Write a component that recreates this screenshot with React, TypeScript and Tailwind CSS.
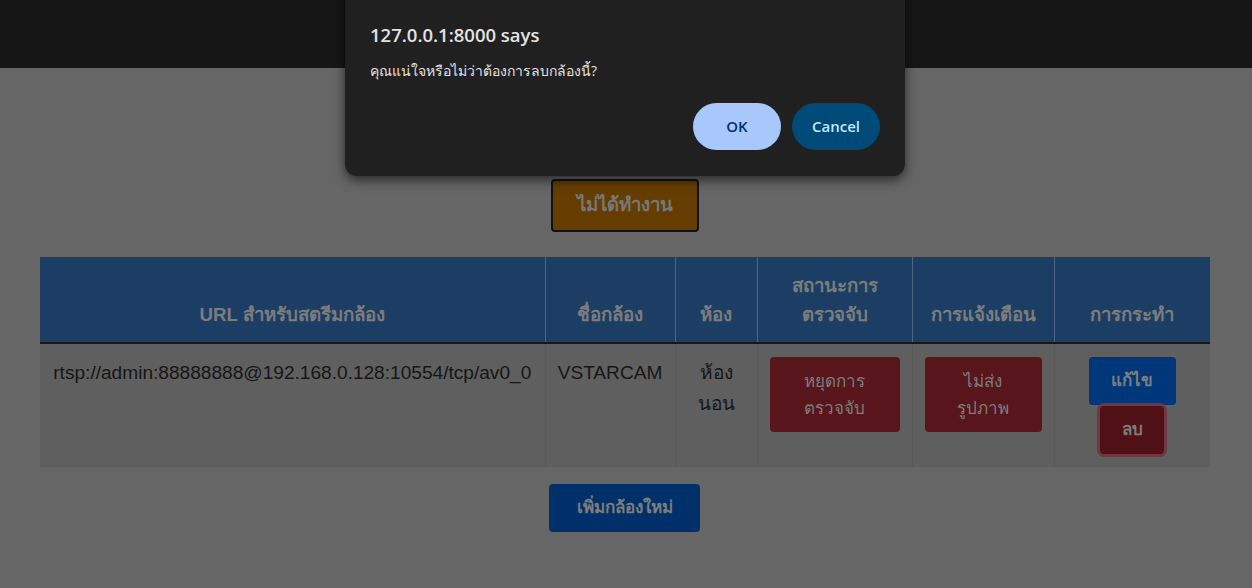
import React from "react";

const cols = [505, 130, 82, 155, 142, 156];

const headers: React.ReactNode[] = [
  "URL สำหรับสตรีมกล้อง",
  "ชื่อกล้อง",
  "ห้อง",
  <>
    สถานะการ
    <br />
    ตรวจจับ
  </>,
  "การแจ้งเตือน",
  "การกระทำ",
];

export default function App() {
  return (
    <div className="relative min-h-[588px] overflow-hidden bg-[#666666] font-['Liberation_Sans',Arial,sans-serif]">
      <header className="h-[68px] bg-[#161616]" />
      <main className="ml-[40px] flex w-[1170px] flex-col items-center">
        <button className="mt-[111px] mr-[1px] h-[53px] w-[148px] rounded-[4px] border-2 border-[#111] bg-[#663d00] text-[18.7px] font-bold text-[#777]">
          ไม่ได้ทำงาน
        </button>
        <table className="mt-[25px] w-[1170px] table-fixed border-collapse">
          <colgroup>
            {cols.map((w, i) => (
              <col key={i} style={{ width: w }} />
            ))}
          </colgroup>
          <thead>
            <tr className="border-b-2 border-[#161616]">
              {headers.map((h, i) => (
                <th
                  key={i}
                  className="border-r border-[#4b6585] bg-[#1d3e64] px-[12px] pt-[14px] pb-[13px] align-bottom text-[18.7px] font-bold leading-[29px] text-[#7c7c7c] last:border-r-0"
                >
                  {h}
                </th>
              ))}
            </tr>
          </thead>
          <tbody>
            <tr className="bg-[#5f5f5f] text-center text-[19.1px] leading-[31px] text-[#161616]">
              <td className="border-r border-[#595959] px-[12px] pt-[13px] align-top">
                rtsp://admin:88888888@192.168.0.128:10554/tcp/av0_0
              </td>
              <td className="border-r border-[#595959] px-[12px] pt-[13px] align-top">VSTARCAM</td>
              <td className="border-r border-[#595959] px-[12px] pt-[13px] align-top">
                ห้อง
                <br />
                นอน
              </td>
              <td className="border-r border-[#595959] px-[12px] pt-[13px] align-top">
                <button className="h-[75px] w-full rounded-[4px] bg-[#58151b] px-[16px] text-[17px] leading-[27px] text-[#7d7d7d]">
                  หยุดการ
                  <br />
                  ตรวจจับ
                </button>
              </td>
              <td className="border-r border-[#595959] px-[12px] pt-[13px] align-top">
                <button className="h-[75px] w-full rounded-[4px] bg-[#58151b] px-[16px] text-[17px] leading-[27px] text-[#7d7d7d]">
                  ไม่ส่ง
                  <br />
                  รูปภาพ
                </button>
              </td>
              <td className="px-[12px] pt-[13px] pb-[13px] align-top">
                <div className="flex flex-col items-center">
                  <button className="h-[48px] w-[87px] rounded-[4px] bg-[#00377a] text-[17px] font-bold leading-[28px] text-[#7d7d7d]">
                    แก้ไข
                  </button>
                  <button className="mt-[1px] h-[48px] w-[64px] rounded-[4px] bg-[#4f1016] text-[17px] font-bold leading-[28px] text-[#7d7d7d] ring-[3px] ring-[#6e3840]">
                    ลบ
                  </button>
                </div>
              </td>
            </tr>
          </tbody>
        </table>
        <button className="mt-[17px] mr-[1px] h-[48px] w-[151px] rounded-[4px] bg-[#00306a] text-[17px] font-bold text-[#7d7d7d]">
          เพิ่มกล้องใหม่
        </button>
      </main>

      <div className="absolute left-[345px] top-[-20px] h-[196px] w-[560px] rounded-[12px] bg-[#202020] px-[25px] pt-[42px] font-['Open_Sans','Noto_Sans',sans-serif] shadow-[0_4px_12px_rgba(0,0,0,0.6)]">
        <div className="text-[18.5px] font-semibold leading-[26px] text-[#e3e3e3]">127.0.0.1:8000 says</div>
        <div className="mt-[13px] text-[14px] leading-[20px] text-[#e3e3e3]">คุณแน่ใจหรือไม่ว่าต้องการลบกล้องนี้?</div>
        <div className="mt-[22px] flex justify-end gap-[11px]">
          <button className="h-[47px] w-[88px] rounded-full bg-[#a8c7fa] text-[15px] font-semibold text-[#062e6f]">OK</button>
          <button className="h-[47px] w-[88px] rounded-full bg-[#004a77] text-[15px] font-semibold text-[#c2e7ff]">Cancel</button>
        </div>
      </div>
    </div>
  );
}
